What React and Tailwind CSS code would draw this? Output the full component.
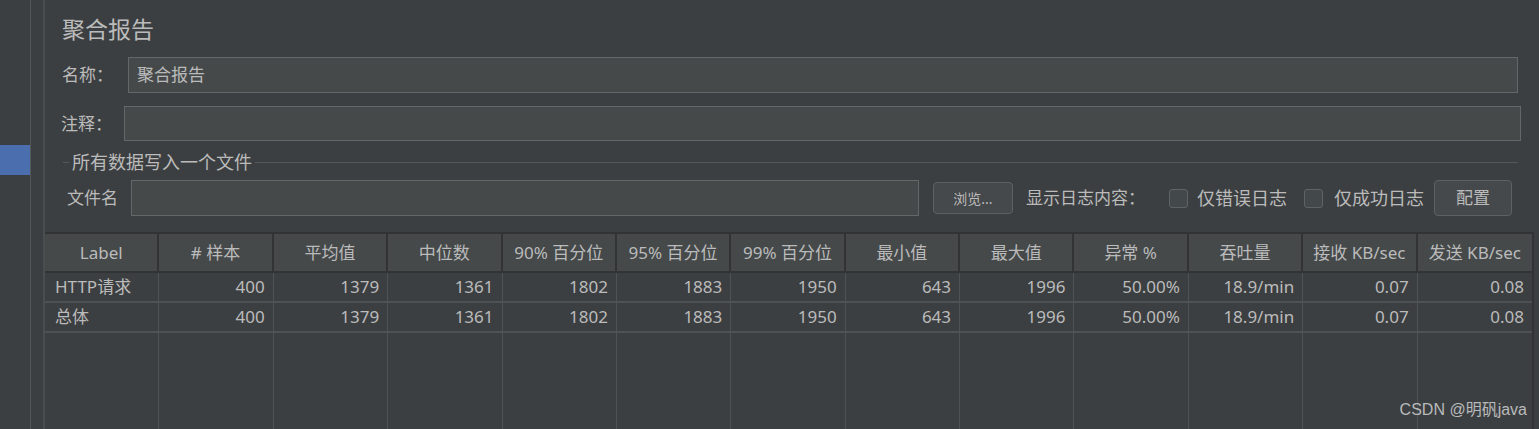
import React from 'react';

const columns = [
  'Label', '# 样本', '平均值', '中位数', '90% 百分位', '95% 百分位', '99% 百分位',
  '最小值', '最大值', '异常 %', '吞吐量', '接收 KB/sec', '发送 KB/sec',
];

const rows = [
  ['HTTP请求', '400', '1379', '1361', '1802', '1883', '1950', '643', '1996', '50.00%', '18.9/min', '0.07', '0.08'],
  ['总体', '400', '1379', '1361', '1802', '1883', '1950', '643', '1996', '50.00%', '18.9/min', '0.07', '0.08'],
];

const Checkbox = () => (
  <div className="w-[19px] h-[19px] rounded-[3px] border border-[#5f6365] bg-[#43494a] shrink-0" />
);

const Button = ({ children, className }) => (
  <div
    className={`flex items-center justify-center rounded-[4px] border border-[#5e6162] bg-[#46494b] shrink-0 ${className}`}
  >
    {children}
  </div>
);

const App = () => {
  return (
    <div className="relative w-[1539px] h-[429px] bg-[#3c3f41] flex overflow-hidden text-[#bbbbbb] text-[17px] font-['Noto_Sans','Noto_Sans_CJK_SC',sans-serif]">
      {/* left tree strip */}
      <div className="w-[30px] flex flex-col">
        <div className="h-[145px]" />
        <div className="h-[30px] bg-[#4b6eaf]" />
      </div>
      <div className="w-px bg-[#55585a]" />
      <div className="w-[12px]" />
      <div className="w-[2px] bg-[#4a4d4f]" />

      {/* main panel */}
      <div className="flex-1 flex flex-col">
        <div className="mt-[14px] h-[30px] pl-[17px] text-[23px] leading-[30px]">聚合报告</div>

        <div className="mt-[13px] h-[36px] flex items-center pl-[17px] mr-[21px]">
          <div className="w-[66px]">名称：</div>
          <div className="flex-1 h-full flex items-center pl-[8px] bg-[#45494a] border border-[#646768]">聚合报告</div>
        </div>

        <div className="mt-[13px] h-[35px] flex items-center pl-[16px] mr-[18px]">
          <div className="w-[63px]">注释：</div>
          <div className="flex-1 h-full bg-[#45494a] border border-[#646768]" />
        </div>

        <div className="mt-[11px] h-[20px] flex items-center pl-[18px] mr-[21px]">
          <div className="w-[6px] h-px bg-[#55585a]" />
          <div className="ml-[3px] leading-[20px] text-[18px]">所有数据写入一个文件</div>
          <div className="ml-[3px] flex-1 h-px bg-[#55585a]" />
        </div>

        <div className="mt-[8px] h-[36px] flex items-center pl-[22px]">
          <div className="w-[64px]">文件名</div>
          <div className="w-[788px] h-full bg-[#45494a] border border-[#646768]" />
          <Button className="ml-[14px] w-[80px] h-[32px] text-[14px]">浏览...</Button>
          <div className="ml-[13px] w-[143px]">显示日志内容：</div>
          <Checkbox />
          <div className="ml-[9px] w-[107px] text-[18px]">仅错误日志</div>
          <Checkbox />
          <div className="ml-[11px] w-[100px] text-[18px]">仅成功日志</div>
          <Button className="w-[78px] h-[36px]">配置</Button>
        </div>

        {/* results table */}
        <div className="mt-[16px] flex-1 mr-[5px] flex flex-col border-t-2 border-r-2 border-[#313335]">
          <div className="grid grid-cols-[repeat(13,minmax(0,1fr))] h-[39px] bg-[#45494a] border-b-2 border-[#313335]">
            {columns.map((c, i) => (
              <div
                key={c}
                className={`flex items-center justify-center whitespace-nowrap ${i < 12 ? 'border-r-2 border-[#313335]' : ''}`}
              >
                {c}
              </div>
            ))}
          </div>

          {rows.map((r, ri) => (
            <div
              key={ri}
              className="grid grid-cols-[repeat(13,minmax(0,1fr))] h-[30px] border-b-2 border-[#4f5253]"
            >
              {r.map((v, i) => (
                <div
                  key={i}
                  className={`flex items-center whitespace-nowrap ${i === 0 ? 'pl-[10px]' : 'justify-end pr-[8px]'} ${i < 12 ? 'border-r border-[#4f5253]' : ''}`}
                >
                  {v}
                </div>
              ))}
            </div>
          ))}

          <div className="flex-1 grid grid-cols-[repeat(13,minmax(0,1fr))]">
            {columns.map((c, i) => (
              <div key={c} className={i < 12 ? 'border-r border-[#4f5253]' : ''} />
            ))}
          </div>
        </div>
      </div>

      {/* watermark */}
      <div className="absolute right-[12px] bottom-[7px] text-[16px] text-[#b9babb] font-['Liberation_Sans','Noto_Sans_CJK_SC',sans-serif]">
        CSDN @明矾java
      </div>
    </div>
  );
};

export default App;
